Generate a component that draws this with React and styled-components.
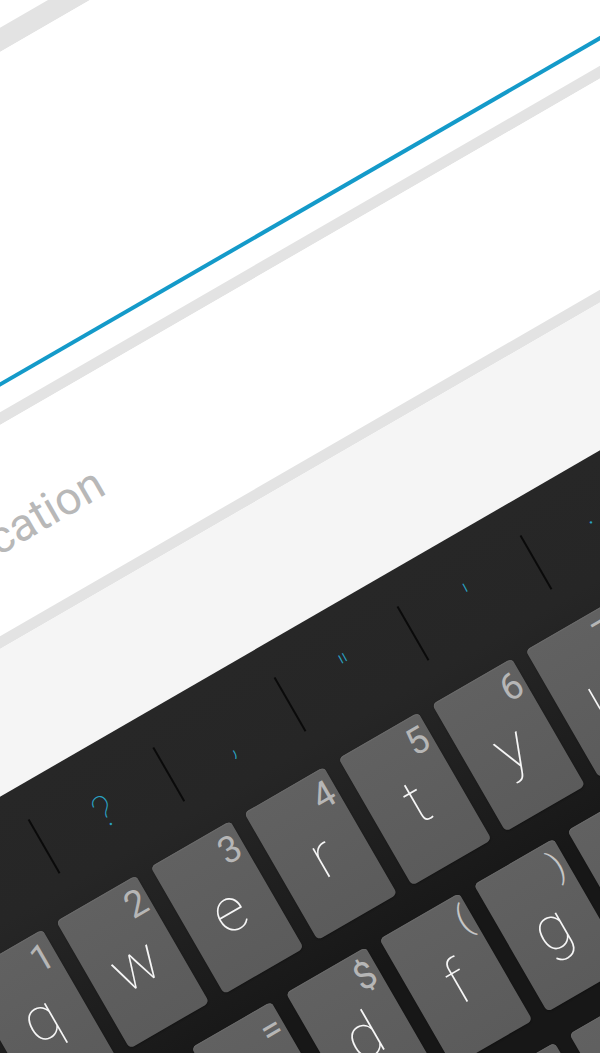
import React from 'react'
import styled, { createGlobalStyle } from 'styled-components'

const GlobalStyle = createGlobalStyle`
    html, body {
        margin: 0;
        padding: 0;
        background: #ffffff;
    }
`;

const Page = styled.div`
    width: 600px;
    height: 1053px;
    overflow: hidden;
    font-family: Roboto, "Liberation Sans", sans-serif;
`;

const Screen = styled.div`
    width: 1084px;
    transform-origin: 0 0;
    transform: rotate(-30deg) translate(-528px, -20px);
`;

const Gap = styled.div`
    height: ${props => props.$height}px;
    background: #ffffff;
`;

const Band = styled.div`
    height: ${props => props.$height}px;
    background: #e3e3e3;
`;

const TitleField = styled.div`
    height: 312px;
    padding-bottom: 22.5px;
    box-sizing: border-box;
    display: flex;
    align-items: flex-end;
    background: #ffffff;
`;

const Underline = styled.div`
    width: 100%;
    height: 4px;
    background: #149ac9;
`;

const LocationField = styled.div`
    height: 183px;
    padding: 11px 0 0 197px;
    box-sizing: border-box;
    display: flex;
    align-items: center;
    background: #ffffff;
`;

const Placeholder = styled.span`
    font-size: 46px;
    color: #b8b8b8;
`;

const Panel = styled.div`
    height: 128px;
    background: #f5f5f5;
`;

const Keyboard = styled.div`
    height: 680px;
    background: linear-gradient(#272727, #262626 110px, #171717 340px);
`;

const Strip = styled.div`
    height: 136px;
    padding: 34px 0 0 2px;
    box-sizing: border-box;
    display: flex;
    align-items: flex-start;
`;

const Cell = styled.div`
    flex: 0 0 ${props => props.$width}px;
    height: 62px;
    box-sizing: border-box;
    border-right: 2.5px solid #0a0a0a;
    display: flex;
    align-items: center;
    justify-content: center;
`;

const Suggestion = styled.span`
    font-size: 44px;
    line-height: 1;
    font-weight: 100;
    color: #2aa2c4;
    margin-bottom: ${props => props.$lift || 0}px;
    margin-right: 5px;
`;

const KeyRows = styled.div`
    display: flex;
    flex-direction: column;
    gap: 30px;
`;

const Row = styled.div`
    display: flex;
    gap: 16.4px;
    padding-left: ${props => props.$inset}px;
`;

const Key = styled.div`
    flex: 0 0 ${props => props.$wide || 92}px;
    height: 147px;
    padding: 3px 4px 0 0;
    box-sizing: border-box;
    display: flex;
    flex-direction: column;
    border-radius: 5px;
    background: linear-gradient(#616161, #5b5b5b);
    box-shadow: inset 0 1px 0 #6a6a6a, 0 1px 2px rgba(0, 0, 0, 0.3);
`;

const Hint = styled.span`
    align-self: flex-end;
    height: 43px;
    font-size: 37px;
    line-height: 43px;
    font-weight: ${props => props.$thin ? 300 : 400};
    color: ${props => props.$thin ? '#c6c6c6' : '#b6b6b6'};
`;

const Letter = styled.span`
    text-align: center;
    padding-left: 4px;
    font-size: 62px;
    line-height: 62px;
    font-weight: 150;
    color: #f6f6f6;
`;

const suggestions = [
    { text: '', width: 142 },
    { text: '?', width: 144 },
    { text: ',', width: 140 },
    { text: '"', width: 141.5 },
    { text: "'", width: 142 },
    { text: '.', width: 142, lift: 42 },
    { text: '', width: 142 },
    { text: '', width: 142 },
];

const rows = [
    {
        inset: 8,
        keys: [
            ['q', '1'], ['w', '2'], ['e', '3'], ['r', '4'], ['t', '5'],
            ['y', '6'], ['u', '7'], ['i', '8'], ['o', '9'], ['p', '0'],
        ],
    },
    {
        inset: 62,
        keys: [
            ['a', '@'], ['s', '='], ['d', '$'], ['f', '('], ['g', ')'],
            ['h', '#'], ['j', '%'], ['k', '&'], ['l', '*'],
        ],
    },
    {
        inset: 8,
        keys: [
            ['', '', 154], ['z', ''], ['x', ''], ['c', ''], ['v', ''],
            ['b', ''], ['n', ''], ['m', ''],
        ],
    },
];

const App = () => {
    return (
        <Page>
            <GlobalStyle />
            <Screen>
                <Gap $height={44} />
                <Band $height={21} />
                <TitleField>
                    <Underline />
                </TitleField>
                <Band $height={11} />
                <LocationField>
                    <Placeholder>Location</Placeholder>
                </LocationField>
                <Band $height={11} />
                <Panel />
                <Keyboard>
                    <Strip>
                        {suggestions.map((item, i) => (
                            <Cell key={i} $width={item.width}>
                                <Suggestion $lift={item.lift}>{item.text}</Suggestion>
                            </Cell>
                        ))}
                    </Strip>
                    <KeyRows>
                        {rows.map(row => (
                            <Row key={row.inset + row.keys[0][0]} $inset={row.inset}>
                                {row.keys.map(([letter, hint, wide], i) => (
                                    <Key key={i} $wide={wide}>
                                        <Hint $thin={hint === '(' || hint === ')'}>{hint}</Hint>
                                        <Letter>{letter}</Letter>
                                    </Key>
                                ))}
                            </Row>
                        ))}
                    </KeyRows>
                </Keyboard>
            </Screen>
        </Page>
    )
}

export default App
